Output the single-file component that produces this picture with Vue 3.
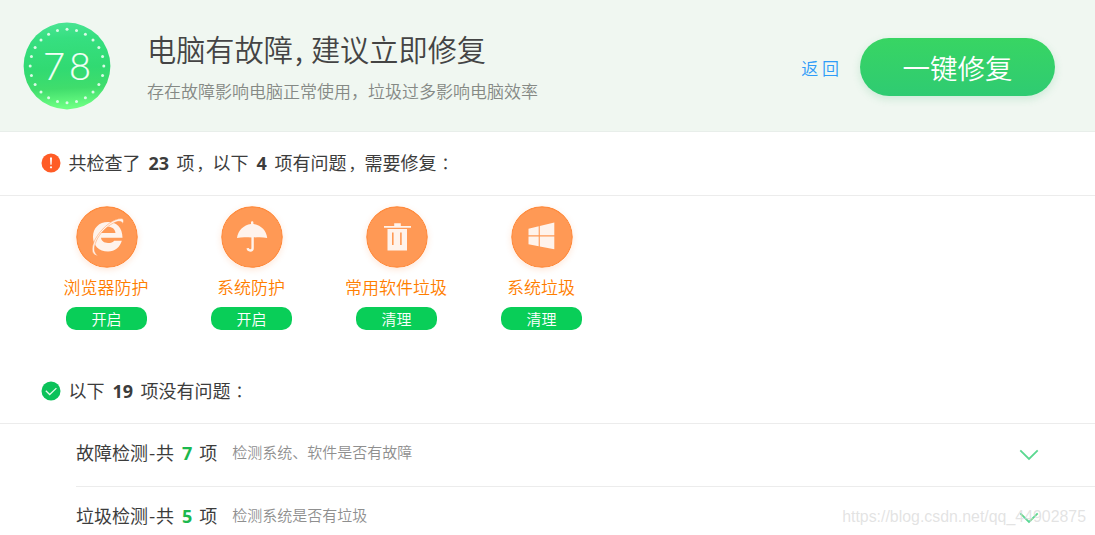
<template>
	<div class="checkup">
		<header class="summary">
			<svg class="score" viewBox="0 0 88 88">
				<defs>
					<linearGradient id="scoreFill" x1="0" y1="0" x2="0.05" y2="1">
						<stop offset="0" stop-color="#4ce596" />
						<stop offset="0.2" stop-color="#36df80" />
						<stop offset="0.55" stop-color="#31da72" />
						<stop offset="0.78" stop-color="#40dd6c" />
						<stop offset="1" stop-color="#6dff83" />
					</linearGradient>
				</defs>
				<circle cx="44" cy="44" r="43.4" fill="url(#scoreFill)" />
				<circle
					v-for="dot in dots"
					:key="dot.id"
					:cx="dot.x"
					:cy="dot.y"
					r="1.5"
					fill="#d9fbe6"
				/>
				<text class="score-text" x="46" y="58" text-anchor="middle">78</text>
			</svg>

			<div class="summary-text">
				<h1>电脑有故障<span class="comma">,</span>建议立即修复</h1>
				<p>存在故障影响电脑正常使用，垃圾过多影响电脑效率</p>
			</div>

			<a class="back">返 回</a>
			<button class="fix-all">一键修复</button>
		</header>

		<section>
			<div class="section-title">
				<svg class="mark" viewBox="0 0 20 20">
					<circle cx="10" cy="10" r="9.5" fill="#ff5c26" />
					<path d="M9 4.600h2l-.4 7.200h-1.200z" fill="#fff" />
					<circle cx="10" cy="14.300" r="1.100" fill="#fff" />
				</svg>
				<p>
					共检查了<b>23</b>项<i>，</i>以下<b>4</b>项有问题<i>，</i>需要修复<i class="colon">：</i>
				</p>
			</div>

			<ul class="problems">
				<li v-for="item in problems" :key="item.name">
					<svg class="problem-icon" viewBox="0 0 62 62">
						<circle cx="31" cy="31" r="30.2" fill="#ff9955" stroke="#ff8a3c" stroke-width="1.2" />
						<g v-if="item.icon === 'browser'" fill="#fff3ec">
							<path
								fill-rule="evenodd"
								d="M32 16C40.500 16 46.500 21.500 46.500 31.800H25C25.500 35 28 37 32 37C35 37 37 36.200 38.200 34.700H45.800C44 41 39 45.500 32 45.500C23 45.500 17 39.500 17 31C17 22 23 16 32 16ZM25 27H39.500C39 23 36 20.800 32.200 20.800C28.200 20.800 25.500 23 25 27Z"
							/>
							<path
								d="M22 49.500C14 49.500 15 39 21.500 29.500C28 20 38 12.500 45.500 12.600C48 12.800 47.800 15.500 46.800 18C46.300 14.500 42 14.800 37.500 17C30.500 20.500 23.500 27.500 20.300 35C17.500 41.500 17.500 47 22 49.500Z"
								stroke="#ff9955"
								stroke-width="0.5"
							/>
						</g>
						<g v-else-if="item.icon === 'umbrella'" fill="#fff3ec">
							<path d="M30 18v-1.500c0-1.600 2.400-1.600 2.400 0V18C40 19 45.500 25 46.200 32C41 30.800 37 31.400 31.200 31.400S21 30.800 16 32C17 24.500 22.500 19 30 18Z" />
							<path d="M31.600 30v12.200c0 3-4.500 3-4.900 0" fill="none" stroke="#fff3ec" stroke-width="2.400" />
						</g>
						<g v-else-if="item.icon === 'trash'" fill="#fff3ec">
							<path d="M18 20h10.200v-2.700h6.600V20H45v1.800H18z" />
							<path fill-rule="evenodd" d="M21.500 23h19.500V44.500H21.500zM26 26.500v12.500h1.600V26.500zM34.100 26.500v12.500h1.600V26.500z" />
						</g>
						<g v-else fill="#fff3ec">
							<path d="M17.500 22.700L27.700 20.300V29.200H17.500zM28.800 20L43.300 16.500V29.200H28.800zM17.500 30.400H27.700V40.200L17.500 38.200zM28.800 30.400H43.300V43.300L28.800 40.400z" />
						</g>
					</svg>
					<span class="problem-name">{{ item.name }}</span>
					<button>{{ item.action }}</button>
				</li>
			</ul>
		</section>

		<section>
			<div class="section-title">
				<svg class="mark" viewBox="0 0 20 20">
					<circle cx="10" cy="10" r="9.5" fill="#0bc25a" />
					<path d="M4.800 9.800l3.900 3.700 6.700-6.400" fill="none" stroke="#e2fbe9" stroke-width="1.3" />
				</svg>
				<p>以下<b>19</b>项没有问题<i class="colon">：</i></p>
			</div>

			<div v-for="group in groups" :key="group.name" class="group">
				<h2>{{ group.name }}<span class="dash">-</span>共<b>{{ group.count }}</b>项</h2>
				<p>{{ group.desc }}</p>
				<svg class="chevron" viewBox="0 0 20 12">
					<path d="M1.300 1.300L10 9.900l8.700-8.600" fill="none" stroke="#5ad890" stroke-width="1.8" />
				</svg>
			</div>
		</section>

		<div class="watermark">https://blog.csdn.net/qq_44902875</div>
	</div>
</template>

<script setup>
import { ref } from 'vue'

// 24 dots around the score, one every 15 degrees
const dots = Array.from({ length: 24 }, (_, i) => {
	const angle = (i * Math.PI) / 12
	return {
		id: i,
		x: 44 + 36.8 * Math.sin(angle),
		y: 44 - 36.8 * Math.cos(angle),
	}
})

const problems = ref([
	{ name: '浏览器防护', icon: 'browser', action: '开启' },
	{ name: '系统防护', icon: 'umbrella', action: '开启' },
	{ name: '常用软件垃圾', icon: 'trash', action: '清理' },
	{ name: '系统垃圾', icon: 'windows', action: '清理' },
])

const groups = ref([
	{ name: '故障检测', count: 7, desc: '检测系统、软件是否有故障' },
	{ name: '垃圾检测', count: 5, desc: '检测系统是否有垃圾' },
])
</script>

<style>
body {
	margin: 0;
	overflow: hidden;
}
</style>

<style scoped>
.checkup {
	position: relative;
	box-sizing: border-box;
	width: 100%;
	height: 535px;
	overflow: hidden;
	background: #fff;
	color: #3c3c3c;
	font-family: 'Noto Sans CJK SC', sans-serif;
}

h1,
h2,
p,
ul {
	margin: 0;
	padding: 0;
	font-weight: normal;
	white-space: nowrap;
}

button {
	padding: 0;
	border: 0;
	color: #fff;
	font-family: inherit;
}

.summary {
	display: flex;
	align-items: center;
	box-sizing: border-box;
	height: 132px;
	padding: 0 40px 0 23px;
	background: #f0f7f1;
	border-bottom: 1px solid #e8eeea;
}

.score {
	width: 88px;
	height: 88px;
}

.score-text {
	fill: #f2fff6;
	stroke: #f2fff6;
	stroke-width: 0.2px;
	font-family: Lato, sans-serif;
	font-size: 38px;
	font-weight: 300;
	letter-spacing: 4px;
}

.summary-text {
	flex: 1;
	padding-top: 5px;
	margin-left: 36px;
}

.summary-text h1 {
	color: #444;
	font-size: 29.2px;
	font-weight: 350;
	line-height: 46px;
}

.summary-text .comma {
	display: inline-block;
	width: 18px;
	text-indent: 2px;
}

.summary-text p {
	color: #858985;
	font-size: 17px;
	font-weight: 350;
	line-height: 40px;
}

.back {
	padding-top: 4px;
	margin-right: 21px;
	color: #2f9cf8;
	font-size: 17px;
	font-weight: 350;
	line-height: 24px;
}

.fix-all {
	width: 195px;
	height: 58px;
	margin-top: 3px;
	border-radius: 29px;
	background: linear-gradient(#38d563, #2fcb72);
	box-shadow: 0 3px 8px rgba(60, 180, 110, 0.2);
	font-size: 27.5px;
	font-weight: 350;
}

.section-title {
	display: flex;
	align-items: center;
	box-sizing: border-box;
	height: 64px;
	padding: 0 0 2px 40.5px;
	border-bottom: 1px solid #ececec;
	font-size: 18px;
}

.section-title p {
	padding-bottom: 2px;
}

.mark {
	width: 20px;
	height: 20px;
	margin-right: 8px;
}

.section-title b,
.group b {
	margin: 0 8px;
	font-family: 'Open Sans', sans-serif;
	font-weight: bold;
}

.section-title b {
	margin-right: 7.5px;
}

.section-title i {
	display: inline-block;
	width: 18px;
	font-size: 16px;
	font-style: normal;
	text-indent: 2px;
}

.section-title .colon {
	font-family: 'Noto Sans CJK JP', sans-serif;
	text-indent: 1px;
}

.problems {
	display: flex;
	height: 164px;
	padding-left: 34px;
	list-style: none;
}

.problems li {
	display: flex;
	flex-direction: column;
	align-items: center;
	width: 145px;
	padding-top: 9.5px;
}

.problem-icon {
	width: 62px;
	height: 62px;
	border-radius: 50%;
	box-shadow: 0 2px 6px rgba(255, 140, 70, 0.2);
}

.problem-name {
	margin: 7.5px 1px 0 0;
	color: #ff7e00;
	font-size: 17px;
	font-weight: 350;
	line-height: 24px;
}

.problems button {
	width: 81px;
	height: 23px;
	margin-top: 8px;
	border-radius: 10px;
	background: #09ce58;
	font-size: 15px;
	font-weight: 350;
	line-height: 23px;
}

.group {
	display: flex;
	align-items: center;
	box-sizing: border-box;
	height: 63px;
	margin-left: 76px;
	padding-right: 56px;
	border-bottom: 1px solid #ececec;
}

.group h2 {
	padding-bottom: 7px;
	font-size: 18px;
}

.group .dash {
	display: inline-block;
	width: 8px;
	text-align: center;
}

.group b {
	margin-right: 7px;
	color: #1cb84e;
}

.group p {
	padding-bottom: 7px;
	margin-left: 15px;
	color: #8f8f8f;
	font-size: 15px;
	font-weight: 350;
}

.chevron {
	width: 20px;
	height: 12px;
	margin-left: auto;
}

.watermark {
	position: absolute;
	right: 9px;
	bottom: 8px;
	color: rgba(215, 215, 215, 0.7);
	font-family: 'Liberation Sans', sans-serif;
	font-size: 15.9px;
	line-height: 20px;
}
</style>
